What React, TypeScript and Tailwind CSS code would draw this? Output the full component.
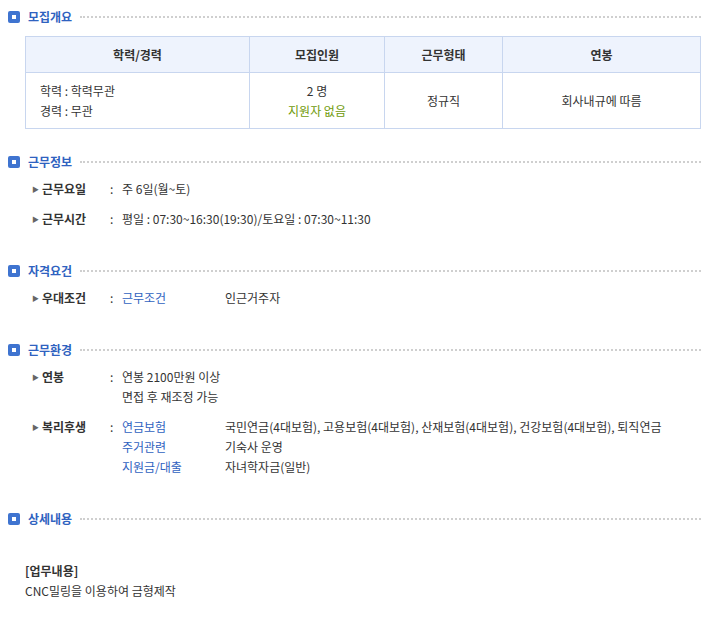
import React from "react";

const font = { fontFamily: '"Noto Sans CJK KR", "Noto Sans", sans-serif' };

const Heading = ({ title }: { title: string }) => (
  <div className="flex items-center h-[20px]">
    <span className="w-[12px] h-[12px] bg-[#3f74d0] rounded-[2px] flex items-center justify-center mr-[8px]">
      <span className="w-[4px] h-[4px] bg-white" />
    </span>
    <span className="text-[12px] font-bold text-[#2f62c0] mr-[8px]">{title}</span>
    <span className="flex-1 border-t-2 border-dotted border-[#cfcfcf]" />
  </div>
);

const Row = ({ label, children }: { label: string; children: React.ReactNode }) => (
  <div className="flex text-[12px] leading-[20px] text-[#333]">
    <div className="w-[102px] pl-[24px] flex items-start">
      <span className="text-[7px] text-[#666] mr-[3px] leading-[20px]">▶</span>
      <span className="font-bold">{label}</span>
    </div>
    <span className="w-[12px]">:</span>
    <div className="flex-1">{children}</div>
  </div>
);

const Sub = ({ k, v }: { k: string; v: string }) => (
  <div className="flex">
    <span className="w-[103px] shrink-0 text-[#2f62c0]">{k}</span>
    <span className="flex-1 pr-[10px]">{v}</span>
  </div>
);

export default function App() {
  return (
    <div className="w-[713px] h-[629px] bg-white pl-[8px] pr-[12px] pt-[7px] text-[#333]" style={font}>
      <Heading title="모집개요" />
      <table className="ml-[17px] mt-[9px] w-[676px] border-collapse text-[12px] text-center">
        <thead>
          <tr className="bg-[#eef3fd] h-[36px] font-bold">
            <th className="border border-[#c8d6ef] w-[224px]">학력/경력</th>
            <th className="border border-[#c8d6ef] w-[135px]">모집인원</th>
            <th className="border border-[#c8d6ef] w-[118px]">근무형태</th>
            <th className="border border-[#c8d6ef]">연봉</th>
          </tr>
        </thead>
        <tbody>
          <tr className="h-[56px]">
            <td className="border border-[#c8d6ef] text-left pl-[14px] leading-[20px]">
              학력 : 학력무관<br />경력 : 무관
            </td>
            <td className="border border-[#c8d6ef] leading-[20px]">
              2 명<br /><span className="text-[#6f9a0a]">지원자 없음</span>
            </td>
            <td className="border border-[#c8d6ef]">정규직</td>
            <td className="border border-[#c8d6ef]">회사내규에 따름</td>
          </tr>
        </tbody>
      </table>

      <div className="mt-[23px]"><Heading title="근무정보" /></div>
      <div className="mt-[7px] flex flex-col gap-[10px]">
        <Row label="근무요일">주 6일(월~토)</Row>
        <Row label="근무시간">평일 : 07:30~16:30(19:30)/토요일 : 07:30~11:30</Row>
      </div>

      <div className="mt-[32px]"><Heading title="자격요건" /></div>
      <div className="mt-[7px]">
        <Row label="우대조건"><Sub k="근무조건" v="인근거주자" /></Row>
      </div>

      <div className="mt-[32px]"><Heading title="근무환경" /></div>
      <div className="mt-[7px] flex flex-col gap-[10px]">
        <Row label="연봉">연봉 2100만원 이상<br />면접 후 재조정 가능</Row>
        <Row label="복리후생">
          <Sub k="연금보험" v="국민연금(4대보험), 고용보험(4대보험), 산재보험(4대보험), 건강보험(4대보험), 퇴직연금" />
          <Sub k="주거관련" v="기숙사 운영" />
          <Sub k="지원금/대출" v="자녀학자금(일반)" />
        </Row>
      </div>

      <div className="mt-[32px]"><Heading title="상세내용" /></div>
      <div className="mt-[32px] pl-[17px] text-[12px] leading-[20px]">
        <div className="font-bold">[업무내용]</div>
        <div>CNC밀링을 이용하여 금형제작</div>
      </div>
    </div>
  );
}
